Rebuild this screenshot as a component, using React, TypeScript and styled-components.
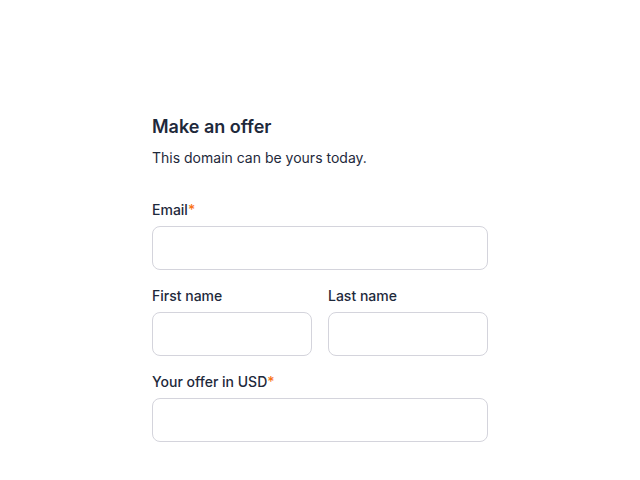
import styled, { createGlobalStyle } from "styled-components"

const GlobalStyle = createGlobalStyle`
  body {
    margin: 0;
    background: #ffffff;
    font-family: Inter, "Noto Sans", sans-serif;
    color: #1f2937;
  }
`

const Page = styled.div`
  display: flex;
  justify-content: center;
  padding-top: 113px;
`

const Form = styled.form`
  width: 336px;
  display: flex;
  flex-direction: column;
`

const Title = styled.h2`
  margin: 0;
  font-size: 18px;
  line-height: 28px;
  font-weight: 600;
  color: #1e293b;
`

const Subtitle = styled.p`
  margin: 7px 0 32px;
  font-size: 14px;
  line-height: 20px;
  color: #1e293b;
`

const Row = styled.div`
  display: flex;
  gap: 16px;
  margin-bottom: 16px;
`

const Field = styled.label`
  flex: 1;
  display: flex;
  flex-direction: column;
  gap: 6px;
`

const LabelText = styled.span`
  font-size: 14px;
  line-height: 20px;
  font-weight: 500;
  color: #1e293b;
`

const Required = styled.span`
  color: #f97316;
`

const Input = styled.input`
  box-sizing: border-box;
  width: 100%;
  height: 44px;
  border: 1px solid #d4d4dc;
  border-radius: 8px;
  padding: 0 12px;
  font: inherit;
  font-size: 14px;
  background: #fff;
  outline: none;
`

const App = () => {
  return (
    <>
      <GlobalStyle />
      <Page>
        <Form onSubmit={(e) => e.preventDefault()}>
          <Title>Make an offer</Title>
          <Subtitle>This domain can be yours today.</Subtitle>
          <Row>
            <Field>
              <LabelText>
                Email<Required>*</Required>
              </LabelText>
              <Input type="email" />
            </Field>
          </Row>
          <Row>
            <Field>
              <LabelText>First name</LabelText>
              <Input type="text" />
            </Field>
            <Field>
              <LabelText>Last name</LabelText>
              <Input type="text" />
            </Field>
          </Row>
          <Row>
            <Field>
              <LabelText>
                Your offer in USD<Required>*</Required>
              </LabelText>
              <Input type="text" />
            </Field>
          </Row>
        </Form>
      </Page>
    </>
  )
}

export default App
